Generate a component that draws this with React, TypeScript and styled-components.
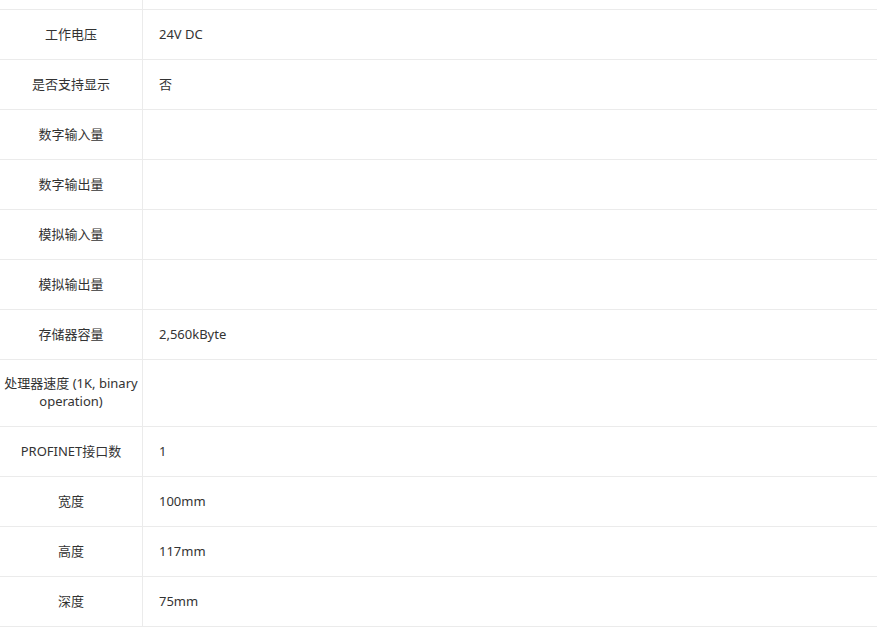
import styled, { createGlobalStyle } from "styled-components";

const GlobalStyle = createGlobalStyle`
  html, body {
    margin: 0;
    padding: 0;
    background: #fff;
  }
  body {
    font-family: "Noto Sans", "Noto Sans CJK SC", sans-serif;
    color: #333;
    font-size: 13px;
  }
`;

const Table = styled.div`
  width: 877px;
  display: flex;
  flex-direction: column;
`;

const Row = styled.div<{ $cut?: boolean }>`
  display: flex;
  border-bottom: 1px solid #ebebeb;
  min-height: ${(p) => (p.$cut ? "9px" : "49px")};
`;

const Label = styled.div`
  width: 143px;
  flex-shrink: 0;
  border-right: 1px solid #ebebeb;
  padding: 14px 3px 16px;
  box-sizing: border-box;
  display: flex;
  align-items: center;
  justify-content: center;
  text-align: center;
  line-height: 18px;
`;

const Value = styled.div`
  flex: 1;
  padding: 14px 16px 16px;
  display: flex;
  align-items: center;
  line-height: 18px;
`;

const Spacer = styled.div`
  width: 143px;
  flex-shrink: 0;
  border-right: 1px solid #ebebeb;
  box-sizing: border-box;
`;

const specs: [string, string][] = [
  ["工作电压", "24V DC"],
  ["是否支持显示", "否"],
  ["数字输入量", ""],
  ["数字输出量", ""],
  ["模拟输入量", ""],
  ["模拟输出量", ""],
  ["存储器容量", "2,560kByte"],
  ["处理器速度 (1K, binary operation)", ""],
  ["PROFINET接口数", "1"],
  ["宽度", "100mm"],
  ["高度", "117mm"],
  ["深度", "75mm"],
];

export default function App() {
  return (
    <>
      <GlobalStyle />
      <Table>
        <Row $cut>
          <Spacer />
        </Row>
        {specs.map(([label, value]) => (
          <Row key={label}>
            <Label>{label}</Label>
            <Value>{value}</Value>
          </Row>
        ))}
      </Table>
    </>
  );
}
